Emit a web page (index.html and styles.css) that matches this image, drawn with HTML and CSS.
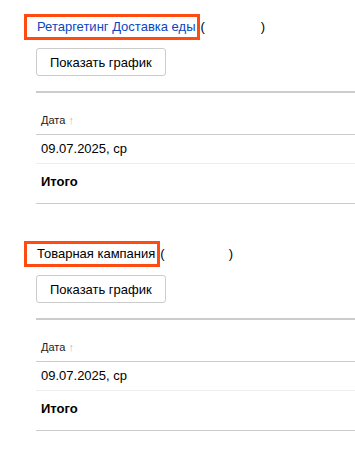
FILE: index.html
```html
<!DOCTYPE html>
<html lang="ru">

<head>
  <meta charset="UTF-8" />
  <meta name="viewport" content="width=device-width, initial-scale=1.0" />
  <title>Отчёт по кампаниям</title>
  <link rel="stylesheet" href="styles.css">
</head>

<body>
  <div class="report">
    <div class="campaign">
      <div class="campaign-title">
        <span class="mark"><a class="campaign-link" href="#">Ретаргетинг Доставка еды</a></span>(<span class="campaign-id"></span>)
      </div>
      <button class="chart-btn">Показать график</button>
      <table class="stat-table">
        <thead>
          <tr><th>Дата <span class="sort">↑</span></th></tr>
        </thead>
        <tbody>
          <tr class="row"><td>09.07.2025, ср</td></tr>
          <tr class="total"><td>Итого</td></tr>
        </tbody>
      </table>
    </div>

    <div class="campaign">
      <div class="campaign-title">
        <span class="mark"><span class="campaign-name">Товарная кампания</span></span>(<span class="campaign-id campaign-id-wide"></span>)
      </div>
      <button class="chart-btn">Показать график</button>
      <table class="stat-table">
        <thead>
          <tr><th>Дата <span class="sort">↑</span></th></tr>
        </thead>
        <tbody>
          <tr class="row"><td>09.07.2025, ср</td></tr>
          <tr class="total"><td>Итого</td></tr>
        </tbody>
      </table>
    </div>
  </div>
</body>

</html>
```

FILE: styles.css
```css
body {
  margin: 0;
  font-family: "Liberation Sans", Arial, sans-serif;
  font-size: 13px;
  color: #000;
  background: #fff;
}

.report {
  padding-top: 13px;
}

.campaign {
  padding-left: 36px;
  height: 227px;
}

.campaign-title {
  margin-left: -12px;
  height: 28px;
  display: flex;
  align-items: center;
  line-height: 16px;
}

.mark {
  border: 3px solid #ff4a12;
  padding: 2px 2px 2px 10px;
  height: 16px;
}

.campaign-link {
  color: #0a45c2;
  text-decoration: none;
}

.campaign-id {
  display: inline-block;
  width: 56px;
}

.campaign-id-wide {
  width: 64px;
}

.chart-btn {
  margin-top: 7px;
  height: 28px;
  padding: 0 13px;
  font-family: inherit;
  font-size: 13px;
  color: #000;
  background: #fff;
  border: 1px solid #ccc;
  border-radius: 3px;
}

.stat-table {
  margin-top: 15px;
  width: 100%;
  border-collapse: collapse;
  border-top: 2px solid #ccc;
}

.stat-table th {
  text-align: left;
  font-weight: normal;
  font-size: 11px;
  line-height: 13px;
  color: #222;
  padding: 21px 0 7px 5px;
  border-bottom: 1px solid #ccc;
}

.sort {
  color: #bbb;
}

.stat-table td {
  padding: 0;
  line-height: 16px;
}

.row td {
  padding: 6px 0 6px 5px;
  border-bottom: 1px solid #eee;
}

.total td {
  font-weight: bold;
  padding: 10px 0 13px 5px;
  border-bottom: 1px solid #ccc;
}
```
